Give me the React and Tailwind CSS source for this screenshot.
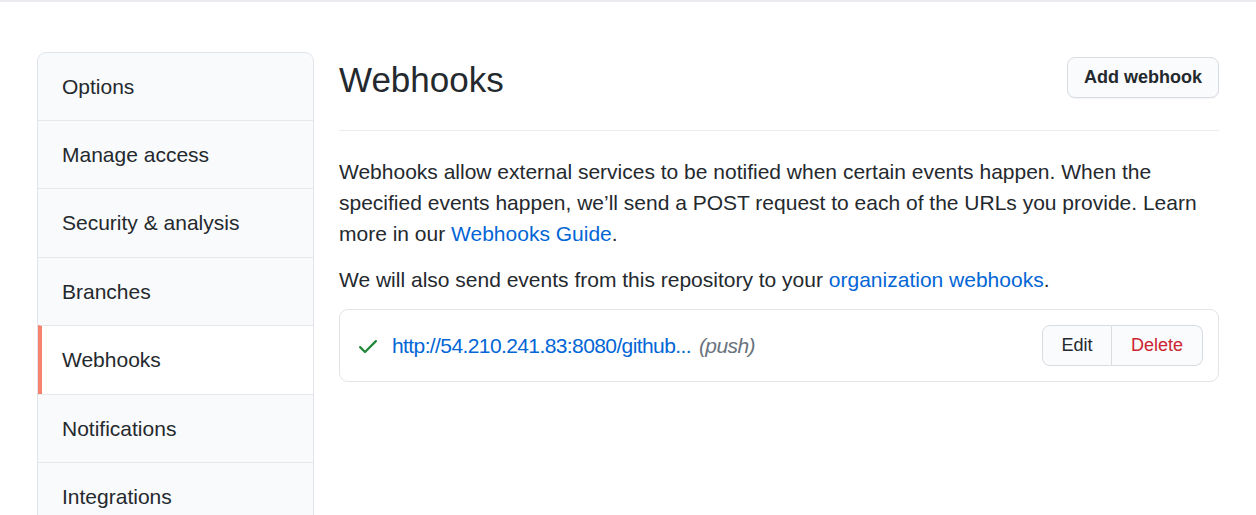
import React from "react";

const items = [
  "Options",
  "Manage access",
  "Security & analysis",
  "Branches",
  "Webhooks",
  "Notifications",
  "Integrations",
];

function Check() {
  return (
    <svg width="24" height="24" viewBox="0 0 16 16" className="fill-[#22863a] shrink-0">
      <path d="M13.78 4.22a.75.75 0 010 1.06l-7.25 7.25a.75.75 0 01-1.06 0L2.22 9.28a.75.75 0 011.06-1.06L6 10.94l6.72-6.72a.75.75 0 011.06 0z" />
    </svg>
  );
}

export default function App() {
  return (
    <div
      className="w-[1256px] h-[515px] overflow-hidden bg-white text-[#24292e]"
      style={{ fontFamily: '"Liberation Sans", Arial, sans-serif' }}
    >
      <div className="h-[2px] bg-[#e9ebee]" />
      <div className="flex pl-[37px] pr-[37px] pt-[50px] gap-[25px]">
        <nav className="w-[277px] shrink-0 border border-[#e1e4e8] rounded-t-[9px] bg-[#f9fafb] overflow-hidden">
          {items.map((it, i) => {
            const active = it === "Webhooks";
            return (
              <div
                key={it}
                className={
                  "flex items-center text-[21px] " +
                  (i > 0 ? "h-[68.4px] border-t border-[#e6e8eb] " : "h-[67px] ") +
                  (active
                    ? "bg-white border-l-[4px] border-l-[#f9826c] pl-[20px]"
                    : "pl-[24px]")
                }
              >
                {it}
              </div>
            );
          })}
        </nav>
        <main className="flex-1 pt-[5px]">
          <div className="flex items-start justify-between border-b border-[#eaecef] pb-[28px]">
            <h2 className="text-[35px] leading-[45px] font-normal">Webhooks</h2>
            <button className="h-[41px] w-[152px] rounded-[8px] border border-[#d9dce0] bg-[#fafbfc] text-[18px] font-bold text-[#24292e] shadow-[0_1px_0_rgba(27,31,35,0.04)]">
              Add webhook
            </button>
          </div>
          <p className="mt-[25px] text-[21px] leading-[31px]">
            Webhooks allow external services to be notified when certain events happen. When the
            specified events happen, we’ll send a POST request to each of the URLs you provide. Learn
            more in our <a className="text-[#0366d6]">Webhooks Guide</a>.
          </p>
          <p className="mt-[15px] text-[21px] leading-[31px]">
            We will also send events from this repository to your{" "}
            <a className="text-[#0366d6]">organization webhooks</a>.
          </p>
          <div className="mt-[14px] border border-[#e1e4e8] rounded-[9px] flex items-center justify-between pl-[16px] pr-[15px] py-[15px]">
            <div className="flex items-center text-[21px] tracking-[-0.6px]">
              <Check />
              <span className="ml-[12px] text-[#0366d6]">http://54.210.241.83:8080/github...</span>
              <span className="ml-[8px] italic text-[#6a737d]">(push)</span>
            </div>
            <div className="flex h-[41px] text-[18px] font-medium">
              <button className="w-[70px] border border-[#d9dce0] rounded-l-[8px] bg-[#fafbfc] text-[#24292e]">
                Edit
              </button>
              <button className="w-[91px] border border-l-0 border-[#d9dce0] rounded-r-[8px] bg-[#fafbfc] text-[#cb2431]">
                Delete
              </button>
            </div>
          </div>
        </main>
      </div>
    </div>
  );
}
